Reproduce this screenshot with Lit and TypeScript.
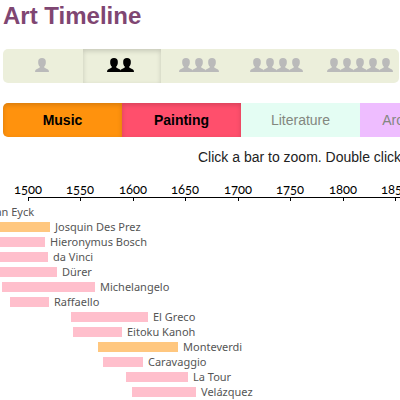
import { LitElement, html, svg, css } from "lit";
import { customElement, property, state } from "lit/decorators.js";
import { classMap } from "lit/directives/class-map.js";
import { styleMap } from "lit/directives/style-map.js";

interface Artist {
  name: string;
  kind: "music" | "painting";
  born: number;
  died: number;
}

const ARTISTS: Artist[] = [
  { name: "Jan van Eyck", kind: "painting", born: 1390, died: 1441 },
  { name: "Josquin Des Prez", kind: "music", born: 1450, died: 1521 },
  { name: "Hieronymus Bosch", kind: "painting", born: 1450, died: 1516 },
  { name: "da Vinci", kind: "painting", born: 1452, died: 1519 },
  { name: "Dürer", kind: "painting", born: 1471, died: 1528 },
  { name: "Michelangelo", kind: "painting", born: 1475, died: 1564 },
  { name: "Raffaello", kind: "painting", born: 1483, died: 1520 },
  { name: "El Greco", kind: "painting", born: 1541, died: 1614 },
  { name: "Eitoku Kanoh", kind: "painting", born: 1543, died: 1590 },
  { name: "Monteverdi", kind: "music", born: 1567, died: 1643 },
  { name: "Caravaggio", kind: "painting", born: 1571, died: 1610 },
  { name: "La Tour", kind: "painting", born: 1593, died: 1652 },
  { name: "Velázquez", kind: "painting", born: 1599, died: 1660 },
];

const YEARS = [1500, 1550, 1600, 1650, 1700, 1750, 1800, 1850];

const x = (year: number) => Math.round(27.96 + (year - 1500) * 1.05);

@customElement("people-icon")
export class PeopleIcon extends LitElement {
  @property({ type: Number }) count = 1;

  static styles = css`
    :host { display: block; }
    svg { display: block; fill: currentColor; }
  `;

  render() {
    const width = this.count * 13 + 1;
    return html`<svg width=${width} height="14" viewBox="0 0 ${width} 14" aria-hidden="true">
      ${Array.from({ length: this.count }, (_, i) => svg`
        <path transform="translate(${i * 13} 0)"
          d="M7 0C9.500 0 10.800 1.400 10.800 3.600V5C10.800 6.600 10 7.800 9.200 8.600V9.600L11 10.600L13 11.400Q14 12 14 14H0Q0 12 1 11.400L3 10.600L4.800 9.600V8.600C4 7.800 3.200 6.600 3.200 5V3.600C3.200 1.400 4.500 0 7 0Z"/>`)}
    </svg>`;
  }
}

@customElement("app-root")
export class AppRoot extends LitElement {
  @state() private level = 2;
  @state() private kinds = new Set(["Music", "Painting"]);

  static styles = css`
    :host {
      display: block;
      overflow: hidden;
      background: #fff;
      color: #222;
      font: 14px/20px "Liberation Sans", Arial, sans-serif;
    }
    .title {
      margin: 0;
      padding: 0 3px;
      color: #7f4672;
      font-size: 24px;
      line-height: 32px;
    }
    fieldset { border: 0; padding: 0; min-width: 0; }
    input {
      appearance: none;
      position: absolute;
      inset: 0;
      margin: 0;
      cursor: pointer;
    }
    .levels {
      display: grid;
      grid-template-columns: 80px 1fr 1fr 1fr 82px;
      height: 34px;
      margin: 17px 1px 0 3px;
      border-radius: 5px;
      background: #ecefdb;
      overflow: hidden;
    }
    .level {
      position: relative;
      display: flex;
      align-items: center;
      justify-content: center;
      padding: 0 3px 2px 0;
      color: #bababa;
    }
    .level:last-child { padding: 0 0 2px 3px; }
    .level.on {
      color: #000;
      box-shadow: inset 0 2px 5px rgba(0, 0, 0, 0.16);
    }
    .kinds {
      display: flex;
      margin: 20px 0 0 3px;
      border-radius: 5px 0 0 5px;
      overflow: hidden;
    }
    .kind {
      position: relative;
      flex: 0 0 119px;
      line-height: 34px;
      text-align: center;
      color: #83877f;
    }
    .kind.on {
      color: #000;
      font-weight: bold;
      box-shadow: inset 0 2px 5px rgba(0, 0, 0, 0.16);
    }
    .music { background: #ff920d; }
    .painting { background: #ff4f6c; }
    .literature { background: #e4fdf3; }
    .architecture { background: #eebdff; }
    .hint {
      margin: 10px 0 0 198px;
      white-space: nowrap;
    }
    .axis {
      display: block;
      width: 100%;
      height: 21px;
      margin: 13px 0 3px;
      overflow: hidden;
      font: 13px Lato, sans-serif;
      font-variant-numeric: oldstyle-nums;
      text-anchor: middle;
    }
    .rule { stroke: #000; fill: none; shape-rendering: crispEdges; }
    .rows {
      margin: 0;
      padding: 0;
      list-style: none;
      color: #555;
      font: 11px/15px "Noto Sans", sans-serif;
    }
    .row { display: flex; gap: 5px; height: 15px; white-space: nowrap; }
    .bar { flex: none; height: 10px; margin-top: 3px; background: #ffbfcc; }
    .bar.tune { background: #ffc77f; }
  `;

  private toggle(kind: string) {
    const next = new Set(this.kinds);
    next.has(kind) ? next.delete(kind) : next.add(kind);
    this.kinds = next;
  }

  render() {
    return html`
      <h1 class="title">Art Timeline</h1>
      <fieldset class="levels" aria-label="Number of artists">
        ${[1, 2, 3, 4, 5].map((n) => html`
          <label class=${classMap({ level: true, on: this.level === n })}>
            <input type="radio" name="level" aria-label="Level ${n}"
              .checked=${this.level === n} @change=${() => (this.level = n)} />
            <people-icon .count=${n}></people-icon>
          </label>`)}
      </fieldset>
      <fieldset class="kinds" aria-label="Art forms">
        ${["Music", "Painting", "Literature", "Architecture"].map((kind) => html`
          <label class=${classMap({ kind: true, [kind.toLowerCase()]: true, on: this.kinds.has(kind) })}>
            <input type="checkbox" .checked=${this.kinds.has(kind)} @change=${() => this.toggle(kind)} />
            ${kind}
          </label>`)}
      </fieldset>
      <p class="hint">Click a bar to zoom. Double click to zoom out.</p>
      <svg class="axis" role="img" aria-label="Years">
        ${YEARS.map((year) => svg`
          <text x=${x(year)} y="14">${year}</text>
          <path class="rule" d="M${x(year)}.5 17V21"/>`)}
        <path class="rule" d="M28 17.500H2000"/>
      </svg>
      <ul class="rows">
        ${ARTISTS.map((a) => html`
          <li class="row">
            <span class=${classMap({ bar: true, tune: a.kind === "music" })}
              style=${styleMap({ marginLeft: `${x(a.born)}px`, width: `${x(a.died) - x(a.born)}px` })}></span>
            <span>${a.name}</span>
          </li>`)}
      </ul>
    `;
  }
}
